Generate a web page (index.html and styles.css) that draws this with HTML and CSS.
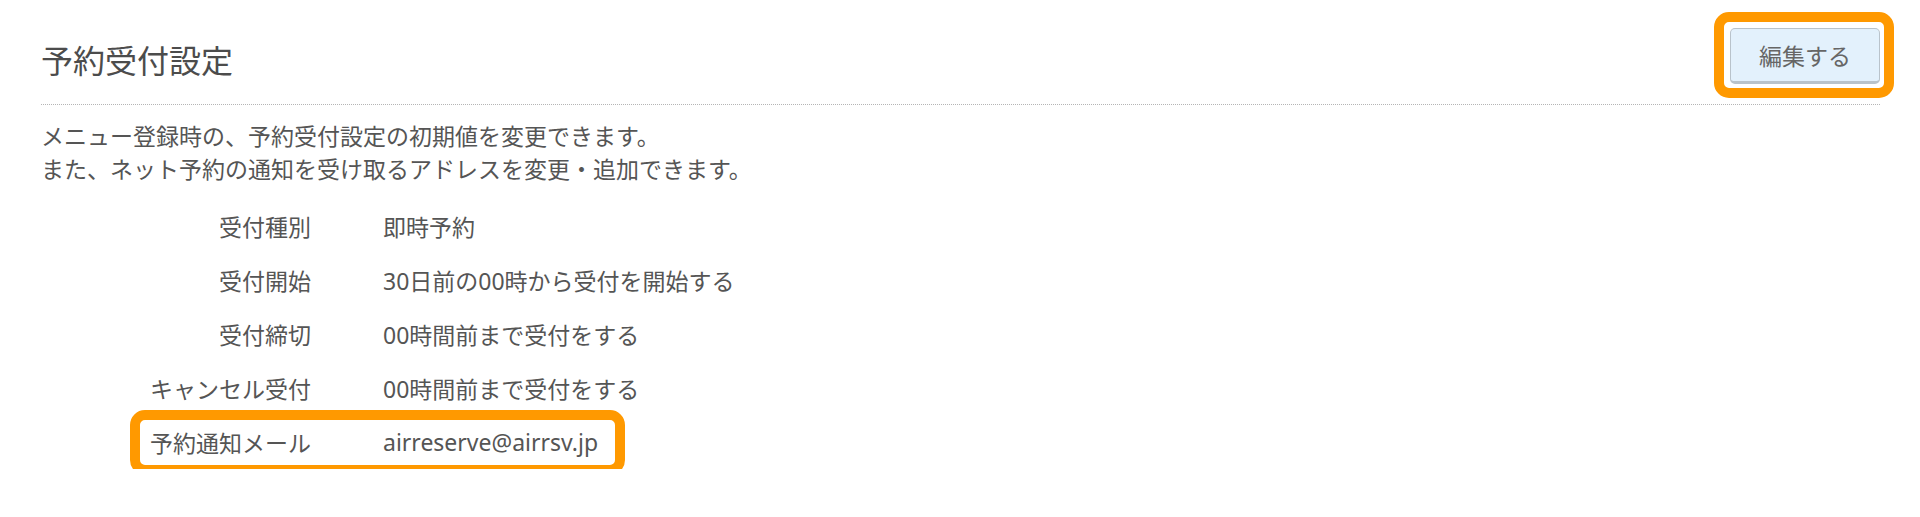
FILE: index.html
```html
<!DOCTYPE html>
<html lang="ja">
<head>
  <meta charset="UTF-8" />
  <title>予約受付設定</title>
  <link rel="stylesheet" href="styles.css">
</head>
<body>
  <section class="panel">
    <header class="panel-head">
      <h1>予約受付設定</h1>
      <button class="edit-btn mark" type="button">編集する</button>
    </header>

    <p class="lead">
      メニュー登録時の、予約受付設定の初期値を変更できます。<br>
      また、ネット予約の通知を受け取るアドレスを変更・追加できます。
    </p>

    <dl class="settings">
      <div class="row"><dt>受付種別</dt><dd>即時予約</dd></div>
      <div class="row"><dt>受付開始</dt><dd>30日前の00時から受付を開始する</dd></div>
      <div class="row"><dt>受付締切</dt><dd>00時間前まで受付をする</dd></div>
      <div class="row"><dt>キャンセル受付</dt><dd>00時間前まで受付をする</dd></div>
      <div class="row row-mark"><dt>予約通知メール</dt><dd>airreserve@airrsv.jp</dd></div>
    </dl>
  </section>
</body>
</html>
```

FILE: styles.css
```css
:root {
  --text: #555;
  --mark: #ff9900;
  --btn-bg: #e3f1fc;
  --btn-border: #b9c3cb;
}
*, *::before, *::after { box-sizing: border-box; }
body {
  margin: 0;
  background: #fff;
  color: var(--text);
  font-family: "Noto Sans", "Noto Sans CJK JP", sans-serif;
}
.panel { padding: 28px 40px 0 41px; }

.panel-head {
  display: flex;
  align-items: center;
  justify-content: space-between;
  height: 77px;
  border-bottom: 1px dotted #b5b5b5;
}
.panel-head h1 {
  margin: 0;
  padding-bottom: 10px;
  font-size: 32px;
  font-weight: 400;
  line-height: 40px;
  color: #4c4c4c;
}

.edit-btn {
  position: relative;
  width: 150px;
  height: 56px;
  margin-bottom: 21px;
  padding: 0;
  border: 1px solid var(--btn-border);
  border-bottom-width: 3px;
  border-radius: 5px;
  background: var(--btn-bg);
  color: #666;
  font-family: inherit;
  font-size: 23px;
  cursor: pointer;
}

/* orange annotation frames */
.mark::after,
.row-mark::after {
  content: "";
  position: absolute;
  border: 10px solid var(--mark);
  border-radius: 15px;
  pointer-events: none;
}
.edit-btn.mark::after { top: -17px; left: -17px; right: -15px; bottom: -17px; }

.lead {
  margin: 15px 0 0;
  font-size: 23px;
  line-height: 33px;
}

.settings { margin: 13px 0 0; }
.row {
  position: relative;
  display: flex;
  height: 54px;
  align-items: center;
  font-size: 23px;
}
.row dt { width: 270px; text-align: right; }
.row dd { margin: 0 0 0 72px; }
.row-mark::after { top: -5px; bottom: -6px; left: 89px; width: 495px; }
```
